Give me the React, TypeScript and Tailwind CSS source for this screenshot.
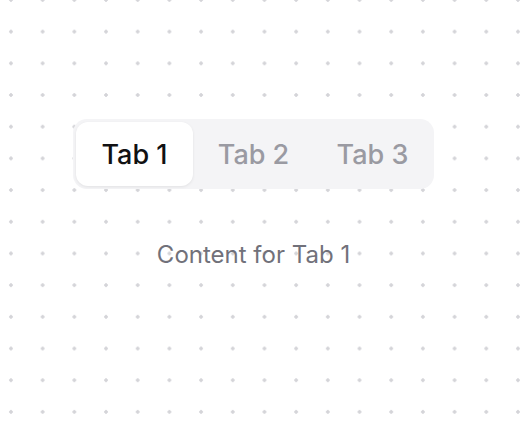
import { useState } from "react";

const tabs = ["Tab 1", "Tab 2", "Tab 3"];

export default function App() {
  const [active, setActive] = useState(0);

  return (
    <div className="h-[424px] w-[520px] overflow-hidden bg-white bg-[radial-gradient(circle,#d4d4d8_1.5px,transparent_2px)] bg-[size:31.7px_31.7px] bg-[position:-4.9px_-15.9px] font-['Inter',sans-serif]">
      <div className="flex flex-col items-center pr-[13px] pt-[119px]">
        <div className="flex h-[70px] w-[361px] items-center gap-[2px] rounded-[14px] bg-[#f4f4f6] p-[3px]">
          {tabs.map((t, i) => (
            <button
              key={t}
              type="button"
              onClick={() => setActive(i)}
              className={
                i === active
                  ? "flex h-[64px] flex-1 items-center justify-center rounded-[12px] bg-white pt-[2px] text-[27px] font-medium text-[#111113] shadow-[0_1px_3px_rgba(0,0,0,0.08)]"
                  : "flex h-[64px] flex-1 items-center justify-center rounded-[12px] pt-[2px] text-[27px] font-medium text-[#9a9aa2]"
              }
            >
              {t}
            </button>
          ))}
        </div>
        <p className="mt-[48px] text-[24px] text-[#71717a]">Content for {tabs[active]}</p>
      </div>
    </div>
  );
}
